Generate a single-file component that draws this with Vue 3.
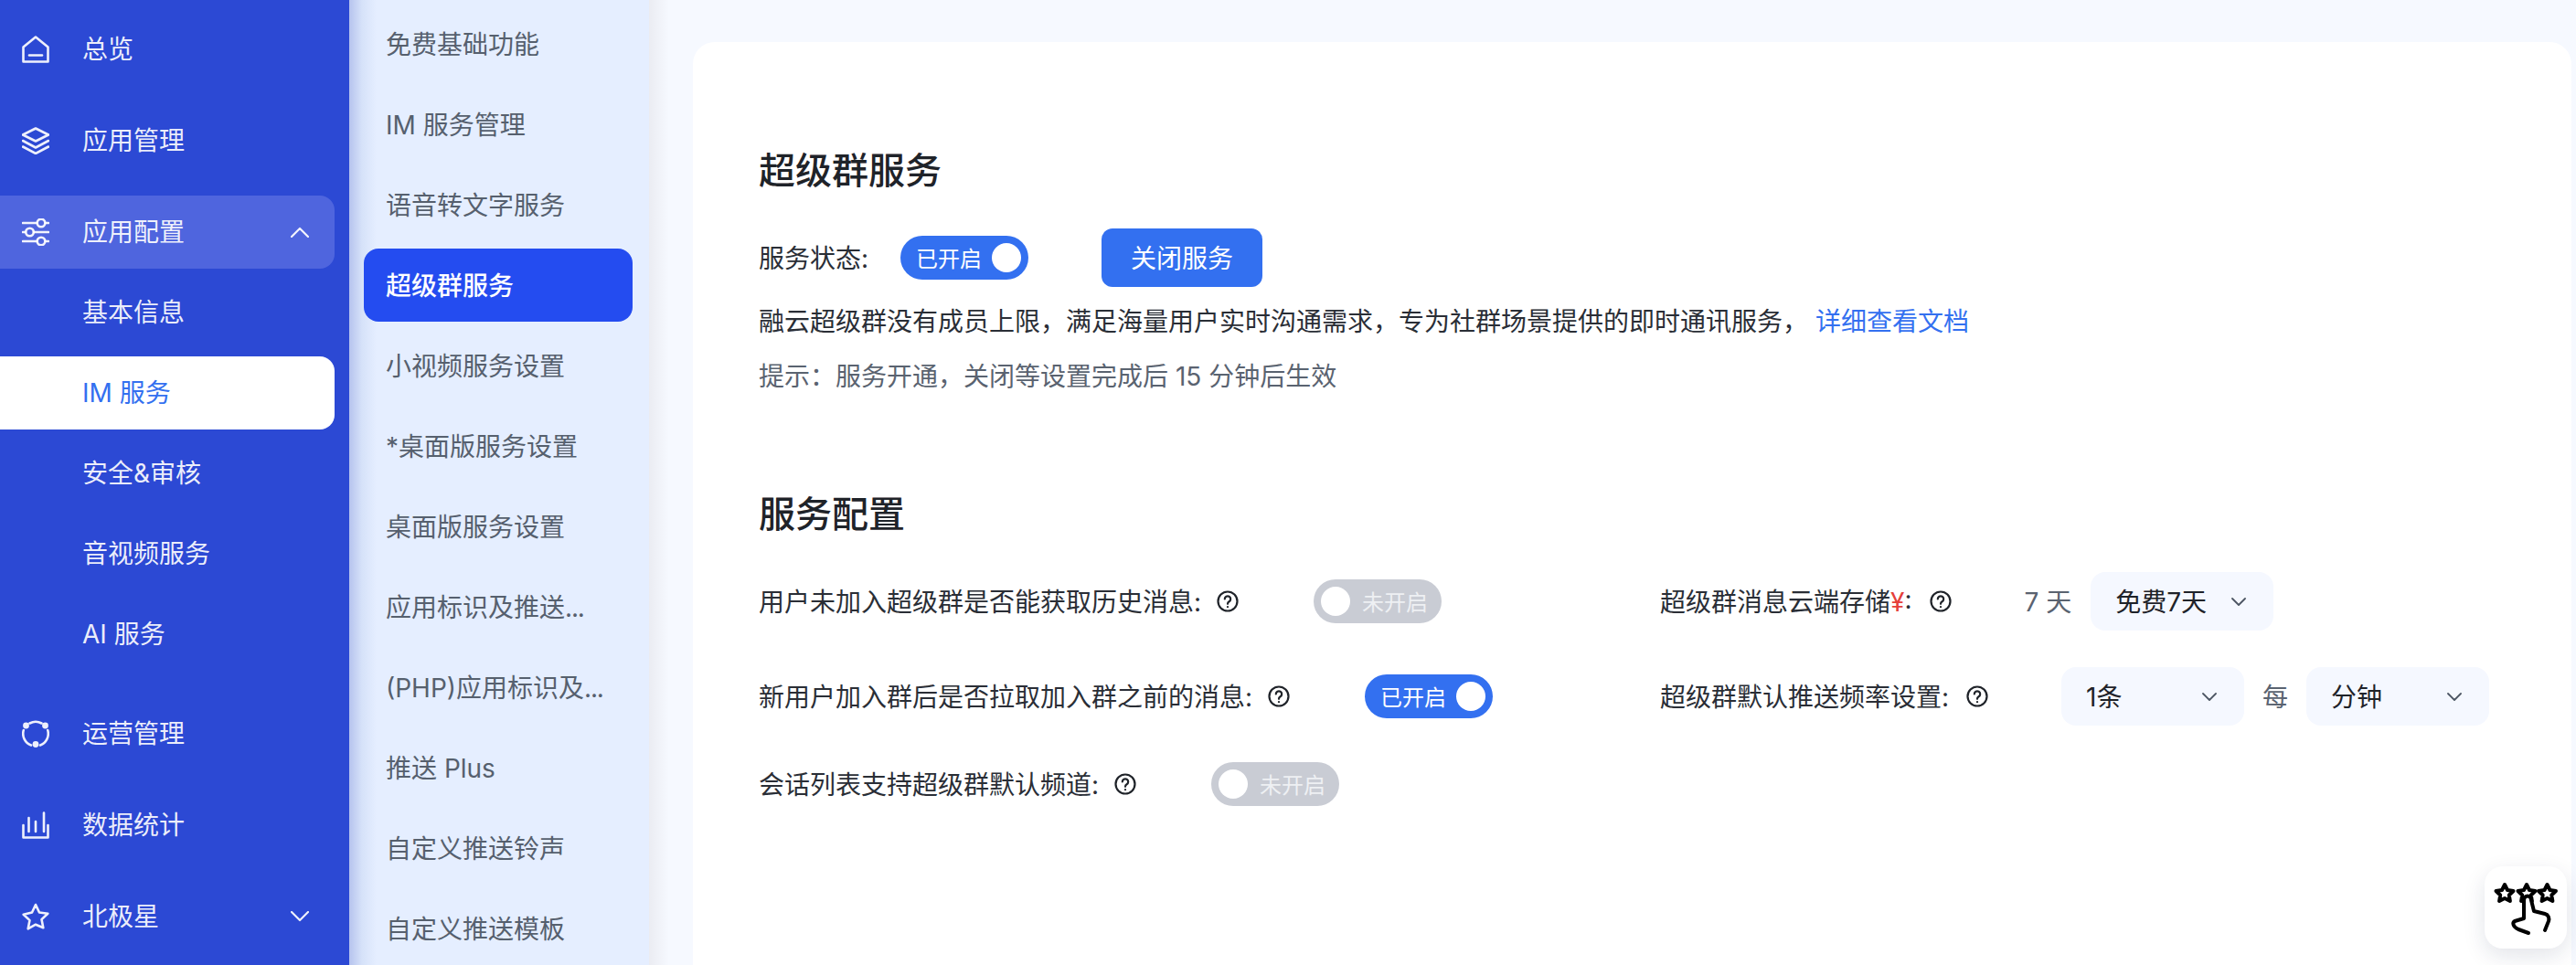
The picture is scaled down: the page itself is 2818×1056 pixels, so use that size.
<template>
  <div class="page">
    <aside class="nav">
      <template v-for="item in navItems" :key="item.label">
        <div
          class="nav-item"
          :class="{ opened: item.open, sub: item.sub, current: item.current, 'after-sub': item.afterSub }"
        >
          <svg v-if="item.icon" class="nav-icon" viewBox="0 0 30 30" fill="none" stroke="currentColor" stroke-width="2.600" stroke-linecap="round" stroke-linejoin="round">
            <template v-if="item.icon === 'home'">
              <path d="M1.500 12.500 15 1.500l13.500 11V28.500H1.500z" />
              <path d="M8 21.500h14" />
            </template>
            <template v-else-if="item.icon === 'layers'">
              <path d="M15 1.500 29 8.500 15 15.500 1 8.500z" />
              <path d="M1 15l14 7.500L29 15" />
              <path d="M1 21.500 15 29l14-7.500" />
            </template>
            <template v-else-if="item.icon === 'sliders'">
              <path d="M1 5h15M26 5h3M1 15h3M13 15h16M1 25h15M26 25h3" />
              <circle cx="21" cy="5" r="4.300" />
              <circle cx="8.500" cy="15" r="4.300" />
              <circle cx="21" cy="25" r="4.300" />
            </template>
            <template v-else-if="item.icon === 'orbit'">
              <path d="M8.500 3.500a13.500 13.500 0 0 1 13 0" />
              <path d="M28.200 11a13.500 13.500 0 0 1-8.200 16.500" />
              <path d="M1.800 11A13.500 13.500 0 0 0 10 27.500" />
              <circle cx="4.500" cy="6" r="3.400" fill="currentColor" stroke="none" />
              <circle cx="25.500" cy="6" r="3.400" fill="currentColor" stroke="none" />
              <circle cx="15" cy="26.500" r="3.400" fill="currentColor" stroke="none" />
            </template>
            <template v-else-if="item.icon === 'chart'">
              <path d="M1.500 15v13.500h27V15" />
              <path d="M7.500 7v15M15 11v11M24 1.500V22" />
            </template>
            <template v-else-if="item.icon === 'star'">
              <path d="M15 2l4 8.500 9.300 1.200-6.800 6.400 1.800 9.200L15 23.700l-8.300 4.600 1.800-9.200-6.800-6.400L11 10.500z" />
            </template>
          </svg>
          <span class="nav-label">{{ item.label }}</span>
          <svg v-if="item.open !== undefined" class="nav-arrow" viewBox="0 0 20 12" fill="none" stroke="currentColor" stroke-width="2.200" stroke-linecap="round" stroke-linejoin="round">
            <path :d="item.open ? 'M1 11l9-9 9 9' : 'M1 1l9 9 9-9'" />
          </svg>
        </div>
      </template>
    </aside>

    <nav class="subnav">
      <div
        v-for="name in subItems"
        :key="name"
        class="subnav-item"
        :class="{ active: name === '超级群服务' }"
      >{{ name.replace("...", "") }}<span v-if="name.endsWith('...')" class="dots">...</span></div>
    </nav>

    <main class="main">
      <section class="card">
        <h2 class="title">超级群服务</h2>
        <div class="status-row">
          <span class="status-label">服务状态:</span>
          <span class="switch on"><span>已开启</span><i class="knob"></i></span>
          <button class="primary-btn">关闭服务</button>
        </div>
        <p class="desc">融云超级群没有成员上限，满足海量用户实时沟通需求，专为社群场景提供的即时通讯服务， <a class="link">详细查看文档</a></p>
        <p class="tip">提示：服务开通，关闭等设置完成后 15 分钟后生效</p>

        <h2 class="title second">服务配置</h2>
        <div class="config">
          <div class="cfg">
            <span>用户未加入超级群是否能获取历史消息:</span>
            <svg class="help" viewBox="0 0 24 24" fill="none" stroke="currentColor" stroke-width="2.200" stroke-linecap="round"><circle cx="12" cy="12" r="10.500" /><path d="M8.800 9.500a3.200 3.200 0 1 1 4.800 2.800c-1 .6-1.600 1.200-1.600 2.500" /><path d="M12 18v.2" /></svg>
            <span class="switch off push"><i class="knob"></i><span>未开启</span></span>
          </div>
          <div class="cfg right">
            <span>超级群消息云端存储<em class="yen">¥</em>:</span>
            <svg class="help" viewBox="0 0 24 24" fill="none" stroke="currentColor" stroke-width="2.200" stroke-linecap="round"><circle cx="12" cy="12" r="10.500" /><path d="M8.800 9.500a3.200 3.200 0 1 1 4.800 2.800c-1 .6-1.600 1.200-1.600 2.500" /><path d="M12 18v.2" /></svg>
            <span class="muted days">7 天</span>
            <div class="select">
              <span>免费7天</span>
              <svg class="chev" viewBox="0 0 16 9" fill="none" stroke="currentColor" stroke-width="1.800" stroke-linecap="round" stroke-linejoin="round"><path d="M1 1l7 7 7-7" /></svg>
            </div>
          </div>
          <div class="cfg">
            <span>新用户加入群后是否拉取加入群之前的消息:</span>
            <svg class="help" viewBox="0 0 24 24" fill="none" stroke="currentColor" stroke-width="2.200" stroke-linecap="round"><circle cx="12" cy="12" r="10.500" /><path d="M8.800 9.500a3.200 3.200 0 1 1 4.800 2.800c-1 .6-1.600 1.200-1.600 2.500" /><path d="M12 18v.2" /></svg>
            <span class="switch on push"><span>已开启</span><i class="knob"></i></span>
          </div>
          <div class="cfg right">
            <span>超级群默认推送频率设置:</span>
            <svg class="help" viewBox="0 0 24 24" fill="none" stroke="currentColor" stroke-width="2.200" stroke-linecap="round"><circle cx="12" cy="12" r="10.500" /><path d="M8.800 9.500a3.200 3.200 0 1 1 4.800 2.800c-1 .6-1.600 1.200-1.600 2.500" /><path d="M12 18v.2" /></svg>
            <div class="select first">
              <span>1条</span>
              <svg class="chev" viewBox="0 0 16 9" fill="none" stroke="currentColor" stroke-width="1.800" stroke-linecap="round" stroke-linejoin="round"><path d="M1 1l7 7 7-7" /></svg>
            </div>
            <span class="muted per">每</span>
            <div class="select">
              <span>分钟</span>
              <svg class="chev" viewBox="0 0 16 9" fill="none" stroke="currentColor" stroke-width="1.800" stroke-linecap="round" stroke-linejoin="round"><path d="M1 1l7 7 7-7" /></svg>
            </div>
          </div>
          <div class="cfg">
            <span>会话列表支持超级群默认频道:</span>
            <svg class="help" viewBox="0 0 24 24" fill="none" stroke="currentColor" stroke-width="2.200" stroke-linecap="round"><circle cx="12" cy="12" r="10.500" /><path d="M8.800 9.500a3.200 3.200 0 1 1 4.800 2.800c-1 .6-1.600 1.200-1.600 2.500" /><path d="M12 18v.2" /></svg>
            <span class="switch off push"><i class="knob"></i><span>未开启</span></span>
          </div>
        </div>
      </section>
    </main>

    <!-- floating feedback button -->
    <div class="float-btn">
      <svg viewBox="0 0 90 90" width="90" height="90" fill="none" stroke="#000" stroke-width="4" stroke-linecap="round" stroke-linejoin="round">
        <path d="M22 20l3 6 6.500 1-4.700 4.500 1.100 6.500-5.900-3.100-5.900 3.100 1.100-6.500L12.500 27l6.500-1z" />
        <path d="M46 20l3 6 6.500 1-4.700 4.500 1.100 6.500-5.900-3.100-5.900 3.100 1.100-6.500L36.500 27l6.500-1z" />
        <path d="M68.500 20l3 6 6.500 1-4.700 4.500 1.100 6.500-5.900-3.100-5.900 3.100 1.100-6.500L59 27l6.500-1z" />
        <path d="M48 73 37 69c-6-3-7-7-4-9l10-3V37c0-6 8-6 8 0l3 12 12 3c4 1 5 5 4 8l-4 10" fill="#fff" />
      </svg>
    </div>
  </div>
</template>

<script setup>
const navItems = [
  { label: "总览", icon: "home" },
  { label: "应用管理", icon: "layers" },
  { label: "应用配置", icon: "sliders", open: true },
  { label: "基本信息", sub: true },
  { label: "IM 服务", sub: true, current: true },
  { label: "安全&审核", sub: true },
  { label: "音视频服务", sub: true },
  { label: "AI 服务", sub: true },
  { label: "运营管理", icon: "orbit", afterSub: true },
  { label: "数据统计", icon: "chart" },
  { label: "北极星", icon: "star", open: false },
];

const subItems = [
  "免费基础功能",
  "IM 服务管理",
  "语音转文字服务",
  "超级群服务",
  "小视频服务设置",
  "*桌面版服务设置",
  "桌面版服务设置",
  "应用标识及推送...",
  "(PHP)应用标识及...",
  "推送 Plus",
  "自定义推送铃声",
  "自定义推送模板",
];
</script>

<style>
html,
body {
  margin: 0;
  background: #f6f9ff;
}
</style>

<style scoped>
.page {
  display: flex;
  height: 1056px;
  overflow: hidden;
  font-family: Inter, "Noto Sans CJK SC", sans-serif;
  font-size: 28px;
  color: #2a2e36;
}

.nav {
  flex: none;
  width: 382px;
  box-sizing: border-box;
  padding: 14px 16px 0 0;
  background: #2c49d4;
  color: rgba(255, 255, 255, 0.92);
}

.nav-item {
  display: flex;
  align-items: center;
  height: 80px;
  margin-bottom: 20px;
  padding-left: 24px;
  border-radius: 0 16px 16px 0;
}

.nav-item.opened {
  background: #4f65de;
  margin-bottom: 8px;
}

.nav-item.sub {
  margin-bottom: 8px;
  padding-left: 90px;
}

.nav-item.current {
  background: #fff;
  color: #3370f0;
}

.nav-item.after-sub {
  margin-top: 29px;
}

.nav-icon {
  flex: none;
  width: 30px;
  height: 30px;
  margin-right: 36px;
}

.nav-label {
  line-height: 40px;
}

.nav-arrow {
  width: 20px;
  height: 12px;
  margin-left: auto;
  margin-right: 28px;
}

.subnav {
  flex: none;
  width: 328px;
  box-sizing: border-box;
  padding: 8px 18px 0 16px;
  background: linear-gradient(90deg, #b6c3ee 0, #d6e2f9 14px, #e5eeff 30px);
}

.subnav-item {
  height: 80px;
  line-height: 82px;
  margin-bottom: 8px;
  padding-left: 24px;
  border-radius: 16px;
  color: #56606e;
  white-space: nowrap;
}

.subnav-item.active {
  background: #244cf0;
  color: #fff;
  font-weight: 500;
}

.dots {
  letter-spacing: -1.200px;
}

.main {
  flex: 1;
  min-width: 0;
  padding: 46px 5px 0 48px;
  background: linear-gradient(90deg, #ebecf2 0, #f6f9ff 22px);
}

.card {
  height: 100%;
  box-sizing: border-box;
  padding: 113px 72px 0;
  background: #fff;
  border-radius: 24px 24px 0 0;
}

.title {
  margin: 0;
  font-size: 40px;
  line-height: 56px;
  font-weight: 500;
  color: #1f2329;
}

.title.second {
  margin-top: 103px;
}

.status-row {
  display: flex;
  align-items: center;
  height: 64px;
  margin-top: 35px;
}

.status-label {
  width: 155px;
  padding-bottom: 2px;
}

.switch {
  flex: none;
  display: inline-flex;
  align-items: center;
  justify-content: space-between;
  box-sizing: border-box;
  width: 140px;
  height: 48px;
  border-radius: 24px;
  font-size: 24px;
  color: #fff;
}

.switch.on {
  background: #3370f0;
  padding: 0 8px 0 17px;
}

.switch.off {
  background: #c9ccd4;
  padding: 0 15px 0 8px;
  color: #eef0f3;
}

.switch span {
  padding-bottom: 2px;
}

.knob {
  width: 32px;
  height: 32px;
  border-radius: 50%;
  background: #fff;
}

.primary-btn {
  width: 176px;
  height: 64px;
  margin-left: 80px;
  padding: 0 0 2px;
  border: none;
  border-radius: 12px;
  background: #3370f0;
  color: #fff;
  font: inherit;
}

.desc,
.tip {
  margin: 18px 0 0;
  line-height: 40px;
}

.tip {
  margin-top: 20px;
  color: #5a6370;
}

.link {
  color: #3370f0;
}

.config {
  display: grid;
  grid-template-columns: 986px auto;
  align-items: center;
  row-gap: 40px;
  margin-top: 35px;
}

.cfg {
  display: flex;
  align-items: center;
}

.cfg > span:first-child,
.muted,
.select span {
  padding-bottom: 2px;
}

.help {
  flex: none;
  width: 24px;
  height: 24px;
  margin-left: 17px;
  color: #1f2329;
}

.right .help {
  margin-left: 19px;
}

.yen {
  font-style: normal;
  color: #e5403a;
}

.push {
  margin-left: 82px;
}

.muted {
  color: #5a6370;
}

.days {
  margin-left: 80px;
  margin-right: 21px;
}

.per {
  margin: 0 20px;
}

.select {
  display: flex;
  align-items: center;
  justify-content: space-between;
  box-sizing: border-box;
  width: 200px;
  height: 64px;
  padding: 0 30px 0 27px;
  border-radius: 16px;
  background: #f5f8ff;
  color: #1f2329;
}

.first {
  margin-left: 80px;
}

.chev {
  width: 16px;
  height: 9px;
  color: #4c5563;
}

.float-btn {
  position: fixed;
  right: 10px;
  bottom: 18px;
  width: 90px;
  height: 90px;
  border-radius: 20px;
  background: #fff;
  box-shadow: 0 8px 24px rgba(20, 30, 70, 0.12);
}
</style>
